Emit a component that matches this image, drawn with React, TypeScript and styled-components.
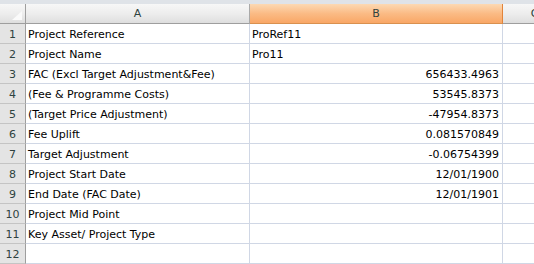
import React from "react";
import styled, { createGlobalStyle, css } from "styled-components";

const Global = createGlobalStyle`
  html, body { margin: 0; padding: 0; background: #ffffff; overflow: hidden; }
  body { font-family: "DejaVu Sans", Tahoma, sans-serif; }
`;

const Page = styled.div`
  width: 534px;
  height: 264px;
  overflow: hidden;
  display: flex;
  flex-direction: column;
`;

const TopStrip = styled.div`
  height: 4px;
  flex: none;
  background: #dfe3e8;
`;

const Sheet = styled.div`
  display: grid;
  grid-template-columns: 26px 224px 253px 64px;
  grid-auto-rows: 20px;
  font-size: 11px;
  color: #000;
`;

const headerGradient = css`
  background: linear-gradient(#f7f7f7 0%, #ececec 55%, #dedede 100%);
`;

const Corner = styled.div`
  ${headerGradient};
  border-right: 1px solid #9e9e9e;
  border-bottom: 1px solid #9e9e9e;
  display: flex;
  align-items: flex-end;
  justify-content: flex-end;
  padding: 0 3px 3px 0;
`;

const ColHead = styled.div<{ $selected?: boolean }>`
  ${headerGradient};
  border-right: 1px solid #a9a9a9;
  border-bottom: 1px solid #9e9e9e;
  display: flex;
  align-items: center;
  justify-content: center;
  color: #2e4240;
  font-size: 11px;
  ${(p) =>
    p.$selected &&
    css`
      background: linear-gradient(#fcd9b3 0%, #fbbb85 50%, #f9a766 100%);
      border-right-color: #e2843b;
      border-bottom-color: #d9914f;
    `}
`;

const RowHead = styled.div`
  background: #e4e4e4;
  border-right: 1px solid #9e9e9e;
  border-bottom: 1px solid #c4c4c4;
  display: flex;
  align-items: center;
  justify-content: center;
  color: #2e4240;
  padding-top: 1px;
`;

const Cell = styled.div<{ $align?: "left" | "right" }>`
  border-right: 1px solid #d0d7e5;
  border-bottom: 1px solid #d0d7e5;
  display: flex;
  align-items: center;
  justify-content: ${(p) => (p.$align === "right" ? "flex-end" : "flex-start")};
  padding: 1px 3px 0 2px;
  white-space: nowrap;
  overflow: visible;
`;

const rows: [string, string, "left" | "right"][] = [
  ["Project Reference", "ProRef11", "left"],
  ["Project Name", "Pro11", "left"],
  ["FAC (Excl Target Adjustment&Fee)", "656433.4963", "right"],
  ["(Fee & Programme Costs)", "53545.8373", "right"],
  ["(Target Price Adjustment)", "-47954.8373", "right"],
  ["Fee Uplift", "0.081570849", "right"],
  ["Target Adjustment", "-0.06754399", "right"],
  ["Project Start Date", "12/01/1900", "right"],
  ["End Date (FAC Date)", "12/01/1901", "right"],
  ["Project Mid Point", "", "left"],
  ["Key Asset/ Project Type", "", "left"],
  ["", "", "left"],
];

export default function App() {
  return (
    <Page>
      <Global />
      <TopStrip />
      <Sheet>
        <Corner>
          <svg width="10" height="9" viewBox="0 0 10 9">
            <polygon points="10,0 10,9 0,9" fill="#fafafa" />
          </svg>
        </Corner>
        <ColHead>A</ColHead>
        <ColHead $selected>B</ColHead>
        <ColHead>C</ColHead>
        {rows.map(([a, b, align], i) => (
          <React.Fragment key={i}>
            <RowHead>{i + 1}</RowHead>
            <Cell>{a}</Cell>
            <Cell $align={align}>{b}</Cell>
            <Cell />
          </React.Fragment>
        ))}
      </Sheet>
    </Page>
  );
}
